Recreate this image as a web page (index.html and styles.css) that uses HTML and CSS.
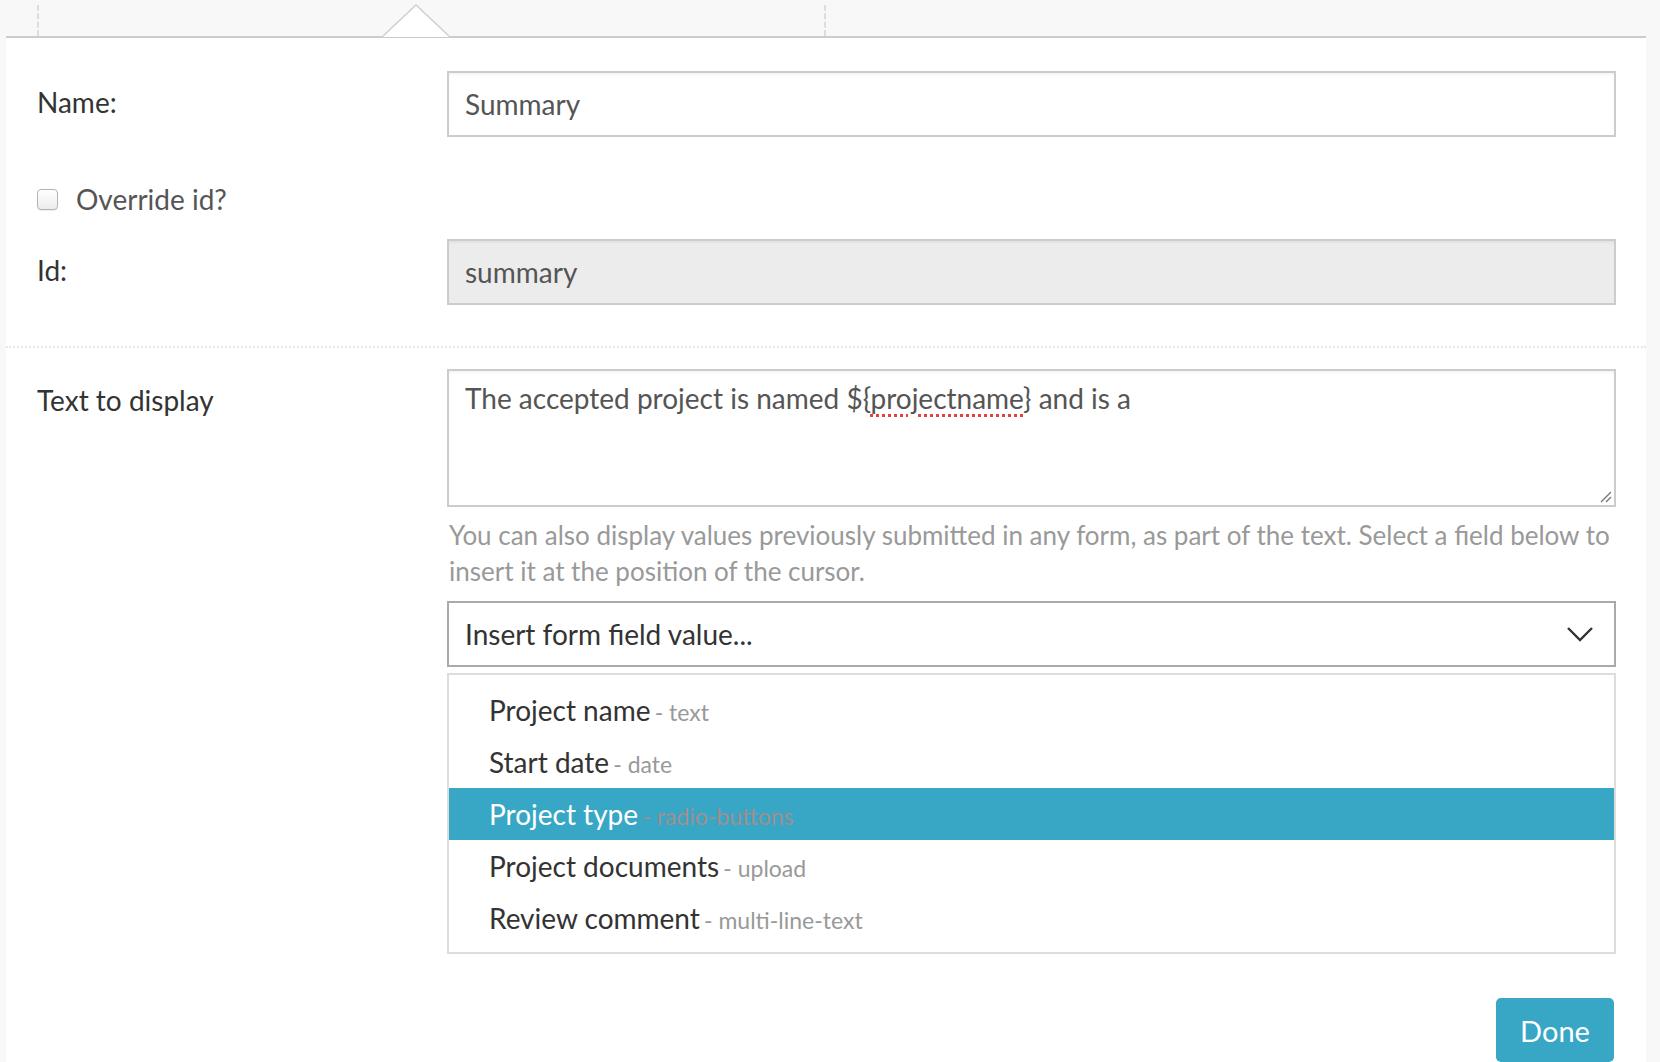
FILE: index.html
```html
<!DOCTYPE html>
<html lang="en">
<head>
<meta charset="utf-8">
<title>Field editor</title>
<link rel="stylesheet" href="styles.css">
</head>
<body>
<div class="tabs">
  <div class="tab"></div>
  <div class="tab"></div>
  <svg class="notch" width="66" height="34" viewBox="0 0 66 34">
    <polygon points="0,33 33,1 66,33" fill="#fff"/>
    <polyline points="0,32 33,1 66,32" fill="none" stroke="#cfcfcf" stroke-width="1.5"/>
  </svg>
</div>
<div class="panel">
  <div class="section first">
    <div class="row">
      <div class="label">Name:</div>
      <div class="field"><div class="input">Summary</div></div>
    </div>
    <div class="check-row">
      <input type="checkbox" class="checkbox">
      <span class="check-label">Override id?</span>
    </div>
    <div class="row">
      <div class="label">Id:</div>
      <div class="field"><div class="input disabled">summary</div></div>
    </div>
  </div>
  <div class="section second">
    <div class="row">
      <div class="label">Text to display</div>
      <div class="field">
        <div class="textarea">The accepted project is named ${<span class="misspelled">projectname</span>} and is a
          <svg class="grip" width="12" height="12" viewBox="0 0 12 12"><path d="M1 11 L11 1 M6 11 L11 6" stroke="#777" stroke-width="1.4" fill="none"/></svg>
        </div>
        <p class="help">You can also display values previously submitted in any form, as part of the text. Select a field below to insert it at the position of the cursor.</p>
        <div class="select">
          <span>Insert form field value...</span>
          <svg class="chevron" width="28" height="16" viewBox="0 0 28 16"><path d="M2 2 L14 14 L26 2" stroke="#333" stroke-width="2.4" fill="none"/></svg>
        </div>
        <ul class="options">
          <li class="option">Project name <span class="type">- text</span></li>
          <li class="option">Start date <span class="type">- date</span></li>
          <li class="option active">Project type <span class="type">- radio-buttons</span></li>
          <li class="option">Project documents <span class="type">- upload</span></li>
          <li class="option">Review comment <span class="type">- multi-line-text</span></li>
        </ul>
        <div class="actions"><button class="done">Done</button></div>
      </div>
    </div>
  </div>
</div>
</body>
</html>
```
FILE: styles.css
```css
html, body {
  margin: 0;
  padding: 0;
  background: #f8f8f8;
  height: 100%;
  overflow: hidden;
}
body {
  font-family: Lato, "Open Sans", sans-serif;
  color: #333;
}
.tabs {
  position: relative;
  display: flex;
  align-items: flex-end;
  height: 36px;
  margin: 0 14px 0 6px;
  padding-left: 31px;
  border-bottom: 2px solid #cccccc;
}
.tab {
  width: 785px;
  height: 31px;
  border-left: 2px dashed #dddddd;
}
.notch {
  position: absolute;
  left: 377px;
  bottom: -2px;
}
.panel {
  margin: 0 14px 0 6px;
  background: #fff;
  min-height: 1100px;
}
.section {
  padding: 0 30px 0 31px;
}
.section.first {
  padding-top: 33px;
  padding-bottom: 41px;
}
.section.second {
  border-top: 2px dotted #e8e8e8;
  padding-top: 21px;
}
.row {
  display: grid;
  grid-template-columns: 410px 1fr;
}
.label {
  font-size: 28px;
  line-height: 36px;
  padding-top: 13px;
  color: #333;
}
.input {
  height: 62px;
  border: 2px solid #cccccc;
  box-shadow: inset 0 2px 2px rgba(0,0,0,0.04);
  padding: 0 16px;
  font-size: 28px;
  line-height: 62px;
  color: #555;
  background: #fff;
}
.input.disabled {
  background: #ececec;
}
.check-row {
  display: flex;
  align-items: center;
  height: 36px;
  margin: 44px 0 22px;
}
.checkbox {
  appearance: none;
  -webkit-appearance: none;
  margin: 0 18px 0 0;
  width: 21px;
  height: 21px;
  border: 1px solid #b3b3b3;
  border-radius: 4px;
  background: linear-gradient(#ffffff, #ececec);
  box-shadow: 0 1px 1px rgba(0,0,0,0.08);
}
.check-label {
  font-size: 28px;
  line-height: 36px;
  color: #555;
}
.textarea {
  position: relative;
  border: 2px solid #cccccc;
  box-shadow: inset 0 2px 2px rgba(0,0,0,0.04);
  padding: 9px 16px 0;
  box-sizing: content-box;
  height: 125px;
  font-size: 28px;
  line-height: 36px;
  color: #555;
}
.misspelled {
  text-decoration: underline dotted #e84040;
  text-decoration-thickness: 3px;
  text-underline-offset: 5px;
}
.grip {
  position: absolute;
  right: 2px;
  bottom: 2px;
}
.help {
  margin: 10px 0 0;
  padding-left: 2px;
  font-size: 26px;
  line-height: 36px;
  color: #999;
}
.select {
  display: flex;
  align-items: center;
  justify-content: space-between;
  margin-top: 12px;
  height: 62px;
  border: 2px solid #aaaaaa;
  padding: 0 20px 0 16px;
  font-size: 28px;
  color: #333;
}
.options {
  list-style: none;
  margin: 6px 0 0;
  padding: 9px 0 8px;
  border: 2px solid #dddddd;
}
.option {
  height: 52px;
  line-height: 52px;
  padding-left: 40px;
  font-size: 28px;
  color: #333;
}
.type {
  font-size: 23px;
  color: #999;
  margin-left: -3px;
}
.option.active {
  background: #38a7c6;
  color: #fff;
}
.option.active .type {
  color: #a08e8e;
}
.actions {
  display: flex;
  justify-content: flex-end;
  margin-top: 44px;
  padding-right: 2px;
}
.done {
  width: 118px;
  height: 64px;
  border: none;
  border-radius: 5px;
  background: #38a7c6;
  color: #fff;
  font-family: Lato, sans-serif;
  font-size: 29px;
  padding: 0;
}
```
